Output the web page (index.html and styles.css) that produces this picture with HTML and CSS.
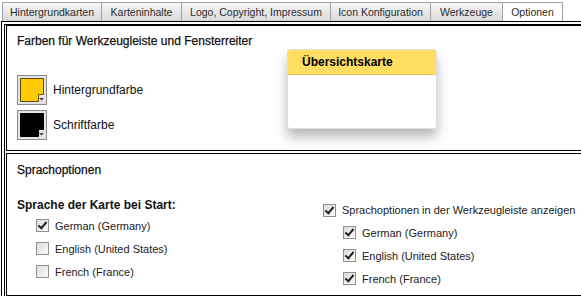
FILE: index.html
```html
<!DOCTYPE html>
<html>
<head>
<meta charset="utf-8">
<link rel="stylesheet" href="styles.css">
</head>
<body>
<div class="wrap">
  <div class="tabs">
    <div class="tab t1">Hintergrundkarten</div>
    <div class="tab t2">Karteninhalte</div>
    <div class="tab t3">Logo, Copyright, Impressum</div>
    <div class="tab t4">Icon Konfiguration</div>
    <div class="tab t5">Werkzeuge</div>
    <div class="tab t6 active">Optionen</div>
  </div>
  <div class="panel">
    <section class="sec sec-colors">
      <h2 class="title">Farben für Werkzeugleiste und Fensterreiter</h2>
      <div class="swatches">
        <div class="swrow">
          <svg class="sw" width="30" height="30" viewBox="0 0 30 30">
            <rect x="0.5" y="0.5" width="29" height="29" fill="#e4e4e4" stroke="#8c8c8c"/>
            <polygon points="3.5,3.5 26.5,3.5 26.5,19.5 21.5,19.5 21.5,26.5 3.5,26.5" fill="#ffcc00" stroke="#5f4b00"/>
            <polygon points="22,23 27,23 24.5,25.5" fill="#444"/>
          </svg>
          <span class="swlabel">Hintergrundfarbe</span>
        </div>
        <div class="swrow">
          <svg class="sw" width="30" height="30" viewBox="0 0 30 30">
            <rect x="0.5" y="0.5" width="29" height="29" fill="#e4e4e4" stroke="#8c8c8c"/>
            <polygon points="3.5,3.5 26.5,3.5 26.5,19.5 21.5,19.5 21.5,26.5 3.5,26.5" fill="#000" stroke="#000"/>
            <polygon points="22,23 27,23 24.5,25.5" fill="#444"/>
          </svg>
          <span class="swlabel">Schriftfarbe</span>
        </div>
      </div>
    </section>
    <section class="sec sec-lang">
      <h2 class="title">Sprachoptionen</h2>
      <div class="cols">
        <div class="col col-left">
          <div class="subhead">Sprache der Karte bei Start:</div>
          <div class="items">
            <label class="row"><span class="cb on"></span>German (Germany)</label>
            <label class="row"><span class="cb"></span>English (United States)</label>
            <label class="row"><span class="cb"></span>French (France)</label>
          </div>
        </div>
        <div class="col col-right">
          <label class="row first"><span class="cb on"></span>Sprachoptionen in der Werkzeugleiste anzeigen</label>
          <div class="items items-r">
            <label class="row"><span class="cb on"></span>German (Germany)</label>
            <label class="row"><span class="cb on"></span>English (United States)</label>
            <label class="row"><span class="cb on"></span>French (France)</label>
          </div>
        </div>
      </div>
    </section>
  </div>
  <div class="popup">
    <div class="popup-head">Übersichtskarte</div>
    <div class="popup-body"></div>
  </div>
</div>
</body>
</html>
```
FILE: styles.css
```css
html, body {
  margin: 0;
  padding: 0;
  background: #fff;
  overflow: hidden;
}
body {
  font-family: "Liberation Sans", Arial, sans-serif;
  color: #000;
}
.wrap {
  position: relative;
  width: 760px;
}
.tabs {
  display: flex;
  padding: 2px 0 0 2px;
  height: 19px;
}
.tab {
  height: 19px;
  box-sizing: border-box;
  border: 1px solid #a3a3a3;
  border-bottom: none;
  margin-right: -1px;
  background: linear-gradient(#f7f7f7, #d9d9d9);
  font-size: 10.5px;
  line-height: 18px;
  color: #2b2b2b;
  white-space: nowrap;
  text-align: center;
}
.t1 { width: 100px; }
.t2 { width: 81px; }
.t3 { width: 150px; }
.t4 { width: 101px; }
.t5 { width: 73px; }
.t6 { width: 61px; }
.tab.active {
  background: #fff;
}
.panel {
  margin-left: 1px;
  border-top: 4px double #000;
  border-left: 4px double #000;
  padding: 0 0 0 1px;
}
.sec {
  border: 1px solid #000;
  box-sizing: border-box;
}
.sec-colors {
  height: 126px;
  padding: 8px 10px 0;
  margin-bottom: 2px;
}
.title {
  margin: 0;
  font-size: 12px;
  font-weight: normal;
  line-height: 14px;
  color: #111;
  -webkit-text-stroke: 0.25px #111;
}
.swatches {
  margin-top: 27px;
  display: flex;
  flex-direction: column;
  gap: 5px;
}
.swrow {
  display: flex;
  align-items: center;
  gap: 6px;
}
.sw { display: block; }
.swlabel {
  font-size: 12px;
  color: #111;
}
.sec-lang {
  height: 143px;
  padding: 9px 10px 0;
}
.cols {
  display: grid;
  grid-template-columns: 306px 1fr;
  margin-top: 21px;
}
.subhead {
  font-size: 12px;
  font-weight: bold;
  line-height: 14px;
  color: #111;
  margin-bottom: 2px;
}
.items {
  padding-left: 19px;
}
.items-r {
  padding-left: 20px;
}
.col-right {
  padding-top: 1px;
}
.row {
  display: flex;
  align-items: center;
  height: 23px;
  font-size: 11px;
  color: #222;
  gap: 6px;
  white-space: nowrap;
}
.row.first {
  height: 22px;
}
.cb {
  width: 13px;
  height: 13px;
  box-sizing: border-box;
  border: 1px solid #8e8f8f;
  background: linear-gradient(135deg, #dcdcdc, #fbfbfb);
  flex: none;
  position: relative;
}
.cb.on::after {
  content: "";
  position: absolute;
  left: 3px;
  top: 0px;
  width: 3px;
  height: 7px;
  border: solid #222;
  border-width: 0 2px 2px 0;
  transform: rotate(40deg);
}
.popup {
  position: absolute;
  left: 287px;
  top: 49px;
  width: 150px;
  height: 80px;
  box-sizing: border-box;
  border: 1px solid #dedede;
  border-radius: 3px;
  background: #fff;
  box-shadow: 0 8px 12px rgba(0, 0, 0, 0.28);
  overflow: hidden;
}
.popup-head {
  height: 24px;
  background: #ffdd60;
  border-bottom: 1px solid #e2c65a;
  font-size: 12px;
  font-weight: bold;
  line-height: 24px;
  padding-left: 14px;
  color: #000;
}
```
